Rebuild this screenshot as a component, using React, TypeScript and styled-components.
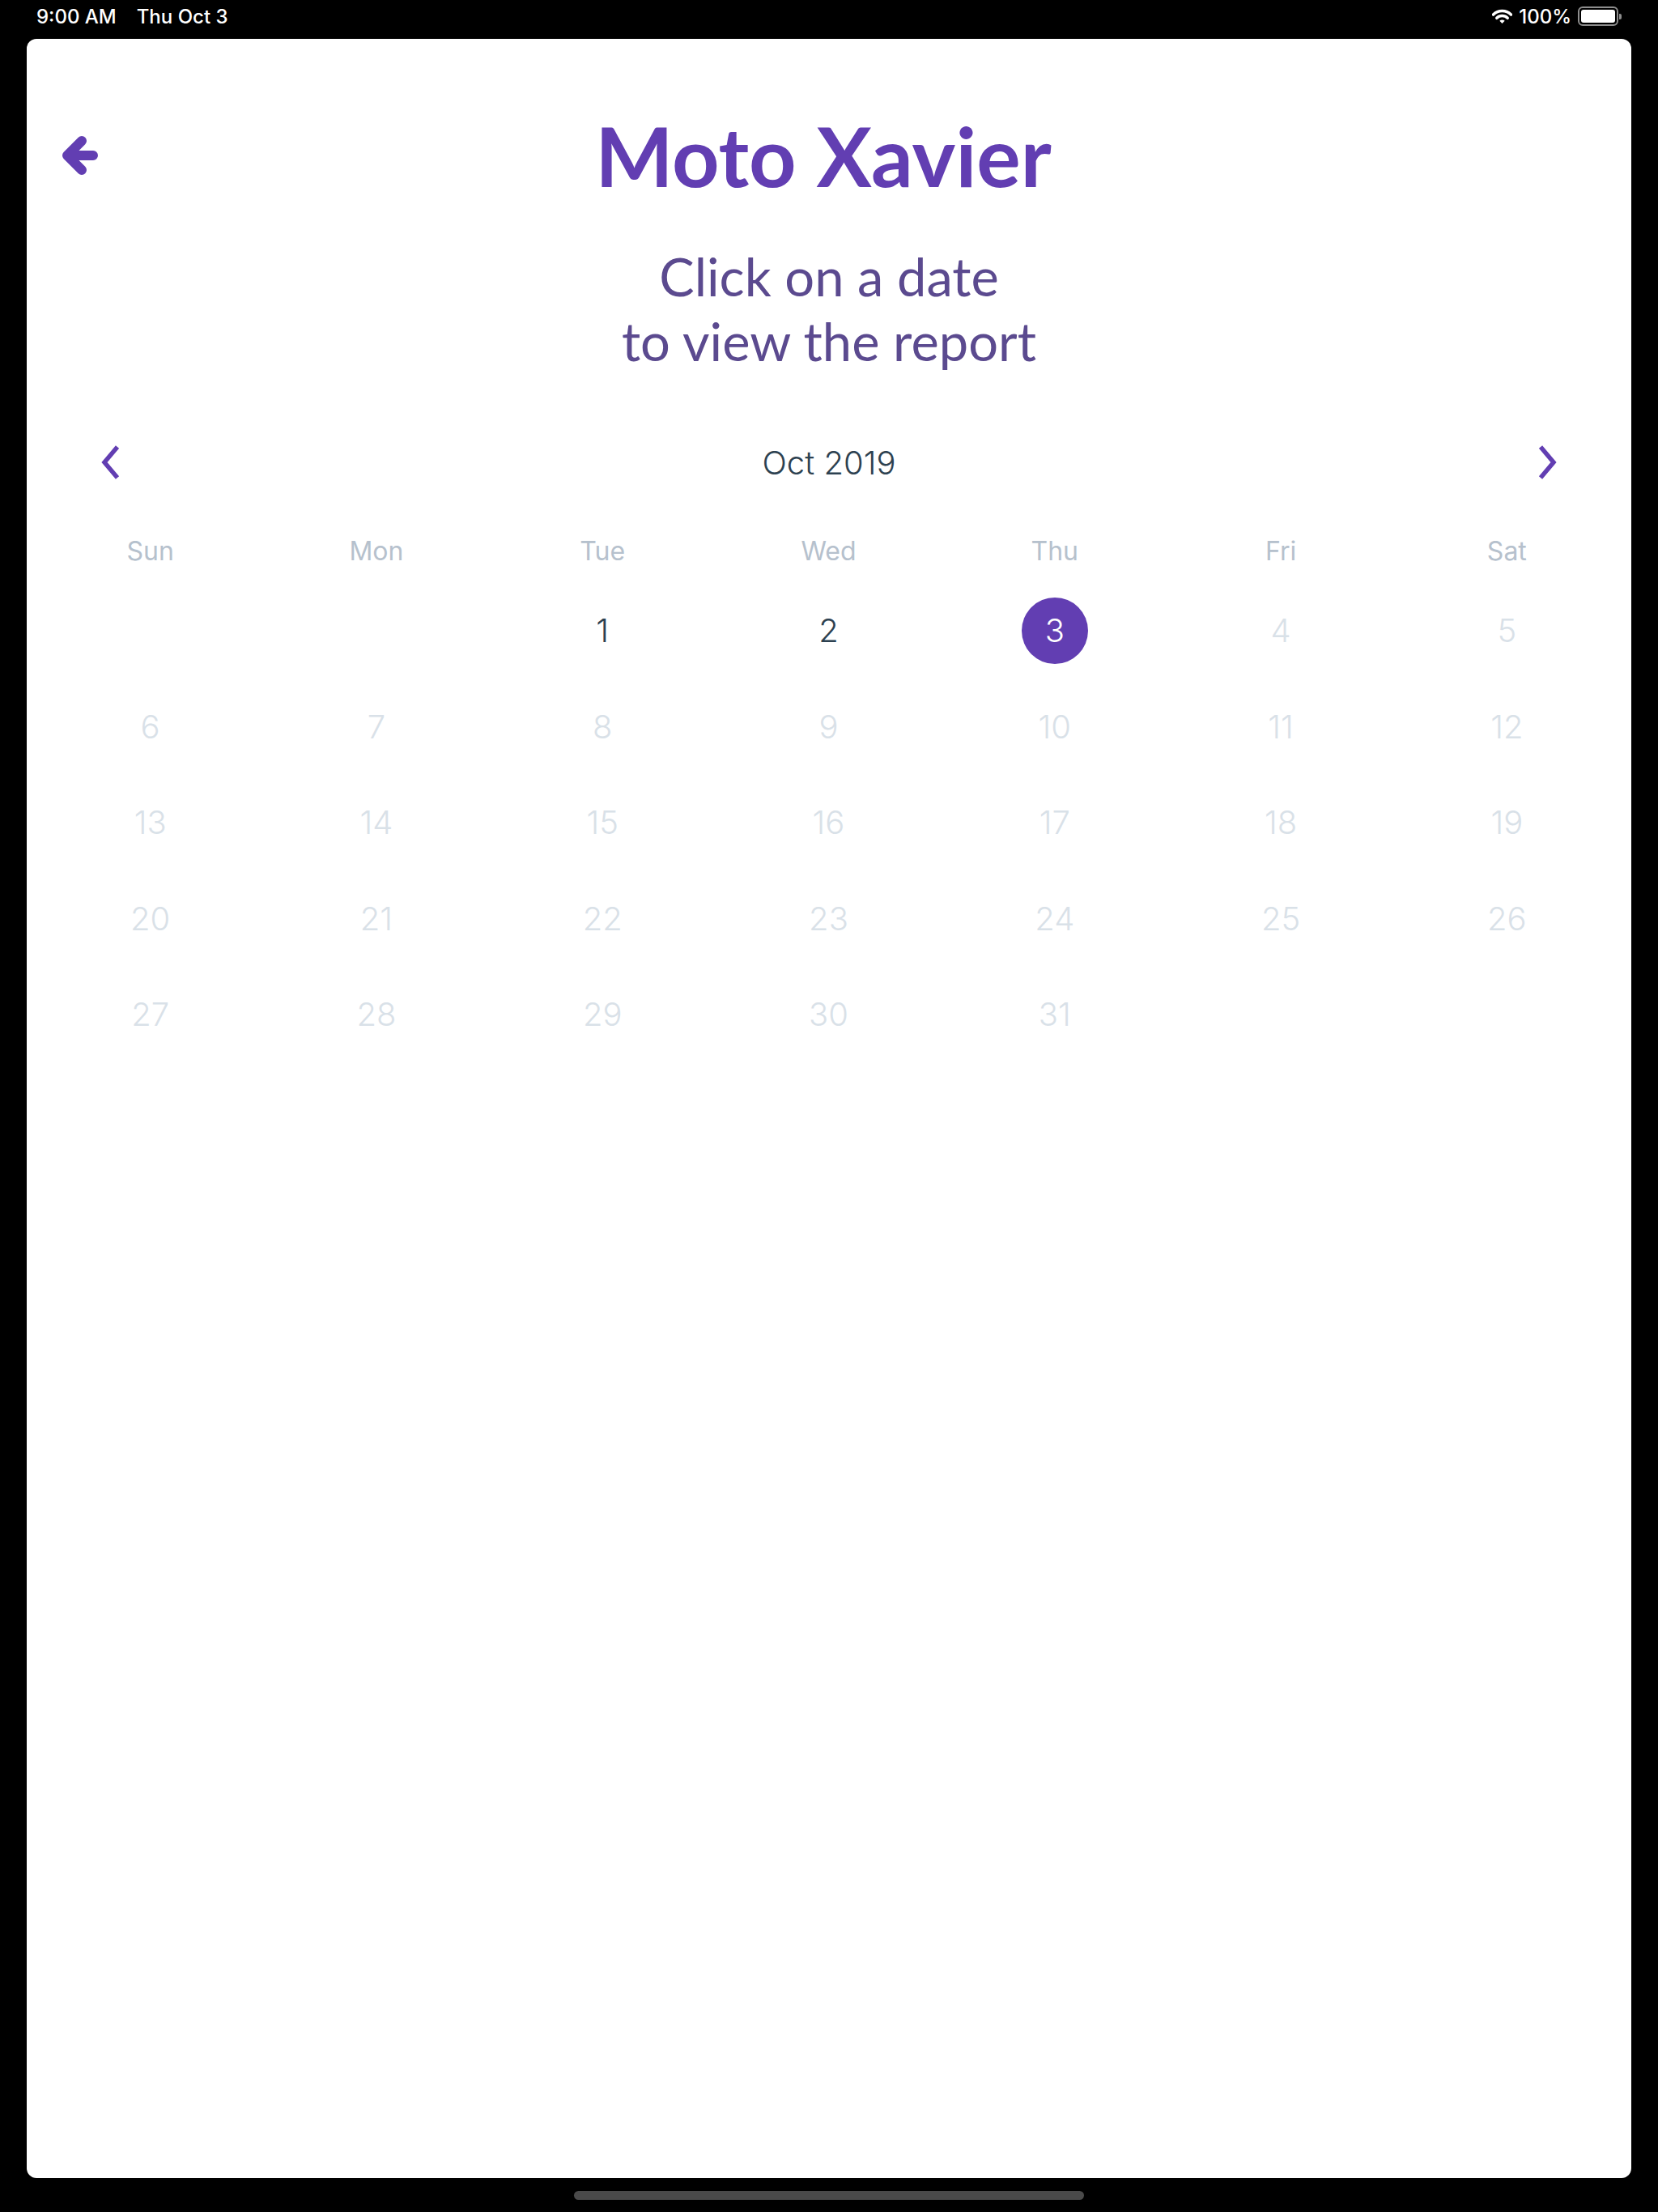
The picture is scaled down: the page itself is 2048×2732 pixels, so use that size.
import React from "react";
import styled, { createGlobalStyle } from "styled-components";

const PURPLE = "#623eb2";

const GlobalStyle = createGlobalStyle`
  html, body {
    margin: 0;
    padding: 0;
    background: #000;
  }
  body {
    font-family: Inter, "Noto Sans", sans-serif;
  }
`;

const Screen = styled.div`
  width: 2048px;
  height: 2732px;
  background: #000;
  display: flex;
  flex-direction: column;
  overflow: hidden;
`;

const StatusBar = styled.div`
  height: 40px;
  margin-bottom: 8px;
  padding: 0 45px;
  display: flex;
  align-items: center;
  justify-content: space-between;
  color: #fff;
  font-family: Inter, sans-serif;
  font-size: 24px;
  font-weight: 500;
`;

const StatusGroup = styled.div`
  display: flex;
  align-items: center;
  gap: ${(p: { $gap: number }) => p.$gap}px;
`;

const Battery = styled.div`
  display: flex;
  align-items: center;
  gap: 1px;
`;

const BatteryBody = styled.div`
  width: 42px;
  height: 16px;
  border: 2px solid #8d8d8d;
  border-radius: 6px;
  padding: 2px;
  box-sizing: content-box;
  &::after {
    content: "";
    display: block;
    width: 100%;
    height: 100%;
    background: #fff;
    border-radius: 3px;
  }
`;

const BatteryTip = styled.div`
  width: 3px;
  height: 7px;
  background: #8d8d8d;
  border-radius: 0 2px 2px 0;
`;

const Sheet = styled.div`
  flex: 0 0 2642px;
  margin: 0 33px;
  background: #fff;
  border-radius: 12px;
  padding-top: 83px;
  box-sizing: border-box;
  display: flex;
  flex-direction: column;
`;

const Header = styled.div`
  display: grid;
  grid-template-columns: 1fr auto 1fr;
  align-items: center;
  padding-right: 14px;
`;

const BackButton = styled.button`
  justify-self: start;
  margin-left: 37px;
  padding: 0;
  border: none;
  background: none;
  cursor: pointer;
  display: flex;
  svg {
    display: block;
  }
`;

const Title = styled.h1`
  margin: 0;
  font-family: Lato, "Open Sans", sans-serif;
  font-weight: 700;
  font-size: 102px;
  line-height: 1.2;
  color: ${PURPLE};
`;

const Subtitle = styled.p`
  margin: 48px 0 0;
  font-family: Lato, "Open Sans", sans-serif;
  font-weight: 400;
  font-size: 65px;
  line-height: 80px;
  text-align: center;
  color: #5b4a8f;
`;

const Calendar = styled.div`
  margin-top: 70px;
  display: flex;
  flex-direction: column;
`;

const MonthRow = styled.div`
  height: 80px;
  padding: 0 92px;
  display: flex;
  align-items: center;
  justify-content: space-between;
`;

const ArrowButton = styled.button`
  padding: 0;
  border: none;
  background: none;
  cursor: pointer;
  display: flex;
  svg {
    display: block;
  }
`;

const MonthLabel = styled.span`
  font-size: 40px;
  font-weight: 300;
  color: #2d4150;
`;

const WeekHeader = styled.div`
  margin: 45px 14px 0 13px;
  height: 50px;
  display: grid;
  grid-template-columns: repeat(7, 1fr);
  align-items: center;
`;

const WeekDay = styled.span`
  text-align: center;
  font-size: 32px;
  font-weight: 400;
  line-height: 50px;
  color: #b6c1cd;
`;

const DayGrid = styled.div`
  margin: 32px 14px 0 13px;
  display: grid;
  grid-template-columns: repeat(7, 1fr);
  grid-auto-rows: 82px;
  row-gap: 36.5px;
`;

const DayCell = styled.div`
  display: flex;
  align-items: center;
  justify-content: center;
`;

const Day = styled.span<{ $selected?: boolean; $disabled?: boolean }>`
  width: 82px;
  height: 82px;
  border-radius: 50%;
  display: flex;
  align-items: center;
  justify-content: center;
  font-size: 40px;
  font-weight: 300;
  line-height: 1;
  background: ${(p) => (p.$selected ? PURPLE : "transparent")};
  color: ${(p) => (p.$selected ? "#fff" : p.$disabled ? "#d9e1e8" : "#2d4150")};
`;

const HomeIndicator = styled.div`
  align-self: center;
  margin-top: 16px;
  width: 630px;
  height: 11px;
  border-radius: 6px;
  background: #4a4a4a;
`;

const weekDays = ["Sun", "Mon", "Tue", "Wed", "Thu", "Fri", "Sat"];
const TODAY = 3;
const FIRST_WEEKDAY = 2; // Oct 1 2019 is a Tuesday
const DAYS_IN_MONTH = 31;

const WifiIcon = () => (
  <svg width="25" height="20" viewBox="0 0 25 20" fill="none">
    <path
      d="M1.54 8.04 A15.5 15.5 0 0 1 23.46 8.04"
      stroke="#fff"
      strokeWidth="3.5"
      strokeLinecap="round"
    />
    <path
      d="M5.78 12.28 A9.5 9.5 0 0 1 19.22 12.28"
      stroke="#fff"
      strokeWidth="3.5"
      strokeLinecap="round"
    />
    <path d="M12.5 19 L9.32 15.82 A4.5 4.5 0 0 1 15.68 15.82 Z" fill="#fff" />
  </svg>
);

const App = () => {
  const cells: (number | null)[] = [];
  for (let i = 0; i < FIRST_WEEKDAY; i++) cells.push(null);
  for (let d = 1; d <= DAYS_IN_MONTH; d++) cells.push(d);

  return (
    <>
      <GlobalStyle />
      <Screen>
        <StatusBar>
          <StatusGroup $gap={25}>
            <span>9:00 AM</span>
            <span>Thu Oct 3</span>
          </StatusGroup>
          <StatusGroup $gap={8}>
            <WifiIcon />
            <span>100%</span>
            <Battery>
              <BatteryBody />
              <BatteryTip />
            </Battery>
          </StatusGroup>
        </StatusBar>

        <Sheet>
          <Header>
            <BackButton aria-label="Back">
              <svg width="56" height="64" viewBox="0 0 56 64" fill="none">
                <path
                  d="M31 14 L13 32 L31 50 M13 32 H45"
                  stroke={PURPLE}
                  strokeWidth="12"
                  strokeLinecap="round"
                  strokeLinejoin="round"
                />
              </svg>
            </BackButton>
            <Title>Moto Xavier</Title>
            <span />
          </Header>

          <Subtitle>
            Click on a date
            <br />
            to view the report
          </Subtitle>

          <Calendar>
            <MonthRow>
              <ArrowButton aria-label="Previous month">
                <svg width="24" height="44" viewBox="0 0 24 44" fill="none">
                  <polyline
                    points="20,3 4,22 20,41"
                    stroke={PURPLE}
                    strokeWidth="5.5"
                    strokeLinejoin="miter"
                  />
                </svg>
              </ArrowButton>
              <MonthLabel>Oct 2019</MonthLabel>
              <ArrowButton aria-label="Next month">
                <svg width="24" height="44" viewBox="0 0 24 44" fill="none">
                  <polyline
                    points="4,3 20,22 4,41"
                    stroke={PURPLE}
                    strokeWidth="5.5"
                    strokeLinejoin="miter"
                  />
                </svg>
              </ArrowButton>
            </MonthRow>

            <WeekHeader>
              {weekDays.map((w) => (
                <WeekDay key={w}>{w}</WeekDay>
              ))}
            </WeekHeader>

            <DayGrid>
              {cells.map((d, i) => (
                <DayCell key={i}>
                  {d !== null && (
                    <Day $selected={d === TODAY} $disabled={d > TODAY}>
                      {d}
                    </Day>
                  )}
                </DayCell>
              ))}
            </DayGrid>
          </Calendar>
        </Sheet>

        <HomeIndicator />
      </Screen>
    </>
  );
};

export default App;
